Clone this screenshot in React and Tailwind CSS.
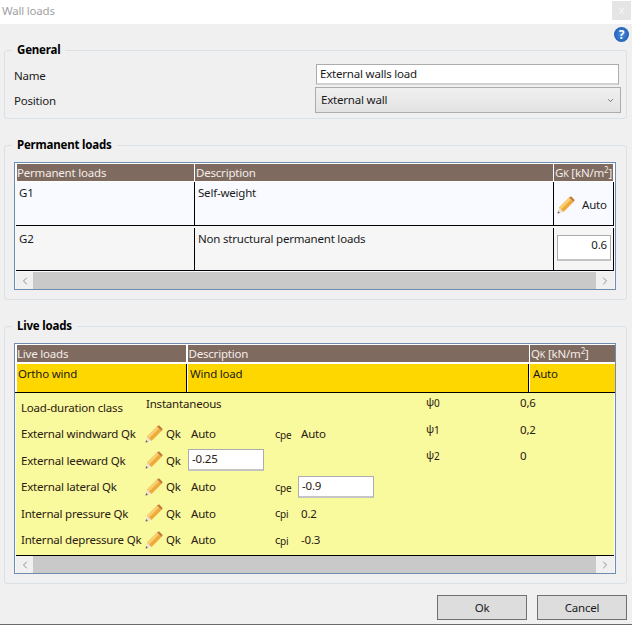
import { ChevronDown, ChevronLeft, ChevronRight } from 'lucide-react'

function Pencil({ className = '' }) {
  return (
    <svg viewBox="0 0 18 18" className={`w-[18px] h-[18px] ${className}`}>
      <polygon points="0.5,17.5 2,11.5 6.5,16" fill="#efe3d0" />
      <polygon points="0.5,17.5 1.1,15 3,16.9" fill="#6b6258" />
      <polygon points="2,11.5 12,1.5 16.5,6 6.5,16" fill="#eeaa3c" />
      <polygon points="2,11.5 12,1.5 14,3.5 4,13.5" fill="#f8d070" />
      <polygon points="12,1.5 14,0.3 17.7,4 16.5,6" fill="#c47a38" />
    </svg>
  )
}

function ScrollBar() {
  return (
    <div className="flex h-[17px] mx-px bg-[#c9c9c9]">
      <div className="w-[17px] bg-[#f0f0f0] flex items-center justify-center">
        <ChevronLeft className="w-3 h-3 text-[#909090]" />
      </div>
      <div className="flex-1" />
      <div className="w-[18px] bg-[#f0f0f0] flex items-center justify-center">
        <ChevronRight className="w-3 h-3 text-[#909090]" />
      </div>
    </div>
  )
}

function Group({ title, className = '', children }) {
  return (
    <fieldset className={`border border-[#d9e0e6] rounded-[3px] ${className}`}>
      <legend className="ml-[7px] px-[5px] h-4 leading-4 font-bold text-black">{title}</legend>
      {children}
    </fieldset>
  )
}

function HeaderCell({ className = '', children }) {
  return <div className={`bg-[#7f6a60] text-[#f3ede8] h-[17px] leading-[18px] whitespace-nowrap ${className}`}>{children}</div>
}

function Unit({ letter }) {
  return (
    <span>
      {letter}<span className="text-[9px]">K</span> [kN/m<sup className="text-[8px] leading-none">2</sup>]
    </span>
  )
}

function Sub({ base, sub }) {
  return (
    <span className="text-[11px]">
      {base}<span className="text-[10px] relative top-[1px]">{sub}</span>
    </span>
  )
}

function LoadRow({ label, field, sign, value }) {
  return (
    <div className="grid grid-cols-[125px_20px_25px_84px_26px_76px] items-center h-[26.5px]">
      <span className="whitespace-nowrap">{label}</span>
      <Pencil className="-ml-px" />
      <span>Qk</span>
      {field}
      {sign && <Sub base="c" sub={sign} />}
      {value}
    </div>
  )
}

const inputBox = 'bg-white border border-[#acacac] border-b-2 border-b-[#c4c4c4] h-[22px] leading-[18px]'

export default function App() {
  return (
    <div className="w-[632px] h-[625px] flex flex-col bg-[#f0f0f0] border-b border-[#6a6a6a] text-[11.5px] tracking-[-0.2px] text-[#1a1a1a] font-['Noto_Sans',sans-serif] overflow-hidden">
      {/* Title */}
      <div className="h-6 bg-white flex justify-between pl-[2px] pr-px text-[#a2a2a2] shrink-0">
        <span className="leading-[21px]">Wall loads</span>
        <div className="w-[19px] h-[19px] mt-px bg-[#e5e5e5] text-[#f6f6f6] text-center leading-[17px]">x</div>
      </div>

      <div className="flex-1 px-1 flex flex-col">
        <div className="h-[18px] flex justify-end pt-[3px]">
          <div className="w-[15px] h-[15px] -mr-px rounded-full bg-radial from-[#4d8fe0] to-[#0f4fa8] text-white font-bold text-[12px] leading-[15px] text-center">?</div>
        </div>

        {/* General */}
        <Group title="General" className="h-[77px] w-[623px]">
          <div className="pl-[9px] pr-[5px]">
            <div className="flex items-center justify-between h-[21px] mt-[6px] pr-[2px]">
              <span className="pt-[2px]">Name</span>
              <div className="w-[303px] h-[21px] bg-white border border-[#acacac] border-b-2 border-b-[#d0d0d0] pl-[3px] leading-[18px]">External walls load</div>
            </div>
            <div className="flex items-center justify-between h-[26px] mt-[2px]">
              <span className="pt-[2px]">Position</span>
              <div className="w-[306px] h-[26px] flex items-center justify-between border border-[#acacac] bg-linear-to-b from-[#f0f0f0] to-[#e3e3e3] pl-[5px] pr-[5px]">
                <span>External wall</span>
                <ChevronDown className="w-[9px] h-[9px] text-[#555]" />
              </div>
            </div>
          </div>
        </Group>

        {/* Permanent loads */}
        <Group title="Permanent loads" className="h-[163px] w-[623px] mt-[18px]">
          <div className="ml-[9px] mt-[9px] w-[602px] h-[128px] border border-[#6d8db0] bg-[#f8faff] flex flex-col">
            <div className="grid grid-cols-[177px_358px_59px] gap-x-px pl-[2px] pt-px h-[19px] bg-white">
              <HeaderCell>Permanent loads</HeaderCell>
              <HeaderCell className="pl-px">Description</HeaderCell>
              <HeaderCell className="pl-px"><Unit letter="G" /></HeaderCell>
            </div>
            <div className="grid grid-cols-[179px_359px_60px] h-[44px] mx-px bg-[#f8faff] border-b border-black">
              <div className="border-r border-black pl-[3px] leading-[22px]">G1</div>
              <div className="border-r border-black pl-[3px] leading-[22px]">Self-weight</div>
              <div className="border-r border-black flex items-center pl-[3px] gap-[7px] pt-[2px]">
                <Pencil />
                <span>Auto</span>
              </div>
            </div>
            <div className="grid grid-cols-[179px_359px_60px] h-[45px] mx-px bg-[#f6f6f6] border-b border-black">
              <div className="border-r border-black pl-[3px] leading-[21px] mt-[2px]">G2</div>
              <div className="border-r border-black pl-[3px] leading-[21px] mt-[2px]">Non structural permanent loads</div>
              <div className="border-r border-black mt-[2px] pl-[3px] pt-[7px]">
                <div className={`${inputBox} w-[54px] h-[26px] text-right pr-[3px] leading-[18px] bg-white`}>0.6</div>
              </div>
            </div>
            <div className="mt-px"><ScrollBar /></div>
          </div>
        </Group>

        {/* Live loads */}
        <Group title="Live loads" className="h-[266px] w-[623px] mt-[18px]">
          <div className="ml-[9px] mt-[9px] w-[602px] h-[231px] border border-[#6d8db0] bg-[#f8faff] flex flex-col">
            <div className="grid grid-cols-[169px_341px_85px] gap-x-[1.5px] pl-[2px] pt-px h-[20px] bg-white">
              <HeaderCell>Live loads</HeaderCell>
              <HeaderCell className="pl-px">Description</HeaderCell>
              <HeaderCell className="pl-px"><Unit letter="Q" /></HeaderCell>
            </div>
            <div className="grid grid-cols-[171px_342px_86px] h-[29px] pl-px bg-white border-b border-black">
              <div className="bg-[#ffd700] border-r border-black ml-px pl-px leading-[19px]">Ortho wind</div>
              <div className="bg-[#ffd700] border-r border-black ml-px pl-[2px] leading-[19px]">Wind load</div>
              <div className="bg-[#ffd700] ml-px pl-[3px] leading-[19px]">Auto</div>
            </div>
            <div className="relative flex-1 bg-[#f9f99e] border-b border-black pl-[5px] pt-px text-[#2a2010] mx-px">
              <div className="grid grid-cols-[125px_auto] h-[26.5px] items-center">
                <span>Load-duration class</span>
                <span className="-mt-[7px]">Instantaneous</span>
              </div>
              <LoadRow label="External windward Qk" field={<span>Auto</span>} sign="pe" value={<span>Auto</span>} />
              <LoadRow label="External leeward Qk" field={<div className={`${inputBox} w-[76px] -ml-[3px] pl-[3px]`}>-0.25</div>} />
              <LoadRow label="External lateral Qk" field={<span>Auto</span>} sign="pe" value={<div className={`${inputBox} w-[76px] -ml-[3px] pl-[3px]`}>-0.9</div>} />
              <LoadRow label="Internal pressure Qk" field={<span>Auto</span>} sign="pi" value={<span>0.2</span>} />
              <LoadRow label="Internal depressure Qk" field={<span>Auto</span>} sign="pi" value={<span>-0.3</span>} />
              {/* psi coefficients float over the rows */}
              <div className="absolute left-[410px] top-[1px] grid grid-cols-[94px_auto] auto-rows-[26.5px]">
                <Sub base="ψ" sub="0" /><span>0,6</span>
                <Sub base="ψ" sub="1" /><span>0,2</span>
                <Sub base="ψ" sub="2" /><span>0</span>
              </div>
            </div>
            <ScrollBar />
          </div>
        </Group>

        {/* Buttons */}
        <div className="flex justify-end gap-[10px] mt-[11px] pr-px">
          <button className="w-[90px] h-[25px] bg-[#dddddd] border border-[#707070]">Ok</button>
          <button className="w-[90px] h-[25px] bg-[#dddddd] border border-[#707070]">Cancel</button>
        </div>
      </div>
    </div>
  )
}
